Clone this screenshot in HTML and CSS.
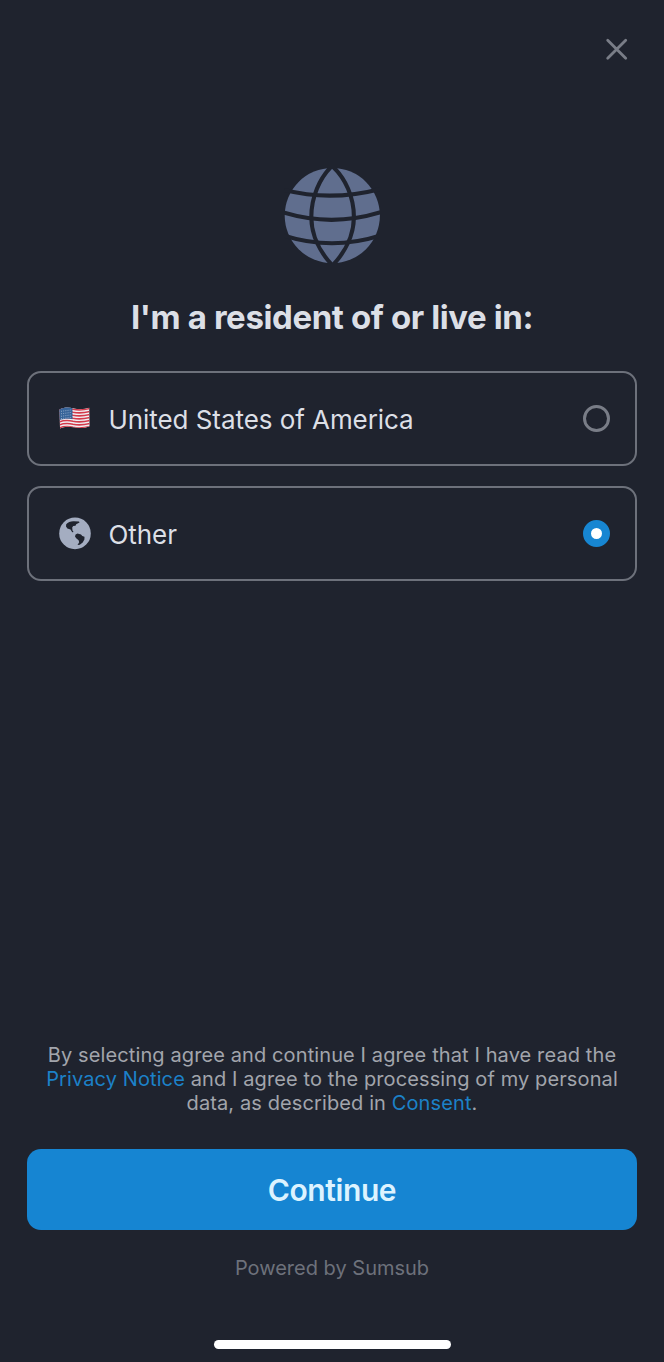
FILE: index.html
```html
<!DOCTYPE html>
<html lang="en">
<head>
    <meta charset="UTF-8">
    <meta name="viewport" content="width=device-width, initial-scale=1.0">
    <title>Country of residence</title>
    <link rel="stylesheet" href="styles.css">
</head>
<body>
    <div class="screen">
        <header class="topbar">
            <button class="close" aria-label="Close">
                <svg width="24" height="24" viewBox="0 0 24 24">
                    <path d="M2.7 3.2L20.7 21.2M20.7 3.2L2.7 21.2"/>
                </svg>
            </button>
        </header>

        <main class="content">
            <svg class="globe" width="96" height="96" viewBox="0 0 96 96">
                <circle cx="48.3" cy="47.6" r="47.6"/>
                <path d="M49-3C35 10 27.3 30 27.3 49C27.3 67 36 85 50 99"/>
                <path d="M47-3C62 10 69.9 30 69.9 49C69.9 67 61 85 47 99"/>
                <path d="M0 22Q48 34 98 20.5"/>
                <path d="M-3 43.8Q48 60 99 43.5"/>
                <path d="M-2 67Q48 83.5 98 67"/>
            </svg>
            <h1 class="title">I'm a resident of or live in:</h1>

            <!-- Residence options -->
            <div class="options">
                <label class="option">
                    <svg class="flag" width="32" height="32" viewBox="0 0 32 32">
                        <clipPath id="flagShape">
                            <path d="M.5 6.5C5 4.3 9 4 14 5.2C20 6.6 25 6.4 30.2 4.8L30.5 23.2C25 25.6 20 25.4 15 24.3C9 23.2 5 23.7 1 25.6Z"/>
                        </clipPath>
                        <g clip-path="url(#flagShape)">
                            <path class="flag-white" d="M0 0H32V32H0Z"/>
                            <path class="flag-stripes" d="M0 7C5 5 9 5 14 6.2C20 7.5 25 7 32 5.2M0 10C5 8 9 8 14 9.2C20 10.5 25 10 32 8.2M0 13C5 11 9 11 14 12.2C20 13.5 25 13 32 11.2M0 16C5 14 9 14 14 15.2C20 16.5 25 16 32 14.2M0 19C5 17 9 17 14 18.2C20 19.5 25 19 32 17.2M0 22C5 20 9 20 14 21.2C20 22.5 25 22 32 20.2M0 25.1C5 23.1 9 23.1 14 24.3C20 25.6 25 25.1 32 23.3"/>
                            <path class="flag-canton" d="M0 3H13.5V16.2C9 15.3 4 15.7 0 17.2Z"/>
                            <path class="flag-stars" d="M2 8.3L13 6.8M2 10.8L13 9.3M2 13.3L13 11.8M2 15.6L13 14.3"/>
                        </g>
                    </svg>
                    <span class="option-name">United States of America</span>
                    <input class="radio" type="radio" name="country">
                </label>
                <label class="option">
                    <svg class="earth" width="32" height="32" viewBox="0 0 32 32">
                        <circle cx="16" cy="15.4" r="15.8"/>
                        <path d="M7.2 6.2C9 4 12 3 15 3.2L20 3.5L20.5 4.6L17.2 6.2L16.5 7.7L14.2 8L13.2 9.6L13.5 12.6L14.6 14.1L13.2 14.2L11.5 11.6L8.4 10.5L7 8.4Z"/>
                        <path d="M16.6 16.6L18.5 15.6L22 16.4L23.3 17.9L25.5 18.7L25.4 21.6L23.7 24.6L20.8 26.8L18.5 27L20.2 24.2L19.6 22.2L17.2 20.2L16 18.4Z"/>
                    </svg>
                    <span class="option-name">Other</span>
                    <input class="radio" type="radio" name="country" checked>
                </label>
            </div>
        </main>

        <footer class="footer">
            <p class="legal">By selecting agree and continue I agree that I have read the <a href="#">Privacy Notice</a> and I agree to the processing of my personal data, as described in <a href="#">Consent</a>.</p>
            <button class="continue">Continue</button>
            <p class="powered">Powered by Sumsub</p>
            <div class="home-indicator"></div>
        </footer>
    </div>
</body>
</html>
```
FILE: styles.css
```css
* {
    box-sizing: border-box;
}
body {
    margin: 0;
    background: #1f232e;
    color: #dcdfe6;
    font-family: Inter, "Liberation Sans", sans-serif;
}
.screen {
    display: flex;
    flex-direction: column;
    height: 1362px;
    padding: 36px 27px 13px;
}
.topbar {
    display: flex;
    justify-content: flex-end;
    padding-right: 7px;
}
.close {
    width: 26px;
    height: 26px;
    padding: 1px;
    border: 0;
    background: none;
}
.close svg {
    display: block;
    overflow: visible;
    fill: none;
    stroke: #797d87;
    stroke-width: 2.8;
    stroke-linecap: round;
}
.content {
    display: flex;
    flex-direction: column;
    align-items: center;
    padding-top: 106px;
}
.globe circle {
    fill: #606e8e;
}
.globe path {
    fill: none;
    stroke: #1f232e;
    stroke-width: 4.1;
}
.title {
    margin: 33px 0 34px;
    font-size: 33px;
    line-height: 40px;
    font-weight: 700;
    letter-spacing: -0.4px;
    white-space: nowrap;
}
.options {
    display: grid;
    gap: 20px;
    width: 100%;
}
.option {
    display: flex;
    align-items: center;
    height: 95px;
    padding: 0 25px 0 29.5px;
    border: 2px solid #6d717b;
    border-radius: 14px;
}
.flag-white {
    fill: #f1eff3;
}
.flag-stripes {
    fill: none;
    stroke: #d43a4b;
    stroke-width: 1.6;
}
.flag-canton {
    fill: #376499;
}
.flag-stars {
    stroke: #a7bdd6;
    stroke-width: 0.8;
    stroke-dasharray: 1 1.2;
}
.earth {
    overflow: visible;
}
.earth circle {
    fill: #a4adc1;
}
.earth path {
    fill: #1f232e;
}
.option-name {
    flex: 1;
    padding: 2px 0 0 18px;
    font-size: 26px;
    line-height: 32px;
    letter-spacing: -0.06px;
}
.radio {
    appearance: none;
    width: 27px;
    height: 27px;
    margin: 0;
    border: 3px solid #797d87;
    border-radius: 50%;
}
.radio:checked {
    border: 8px solid #1786d2;
    background: #fff;
}
.footer {
    display: flex;
    flex-direction: column;
    align-items: center;
    margin-top: auto;
}
.legal {
    width: 590px;
    margin: 0 0 34px;
    color: #a2a5ac;
    font-size: 20px;
    line-height: 24px;
    letter-spacing: 0.11px;
    text-align: center;
}
.legal a {
    color: #1c81c8;
    text-decoration: none;
}
.continue {
    width: 100%;
    height: 81px;
    padding: 0;
    border: 0;
    border-radius: 14px;
    background: #1685d2;
    color: #dcf3ff;
    font-family: inherit;
    font-size: 30px;
    font-weight: 600;
    letter-spacing: -0.4px;
}
.powered {
    margin: 25px 0 59px;
    color: #6d717b;
    font-size: 20px;
    line-height: 26px;
}
.home-indicator {
    width: 237px;
    height: 9px;
    border-radius: 5px;
    background: #fff;
}
```
